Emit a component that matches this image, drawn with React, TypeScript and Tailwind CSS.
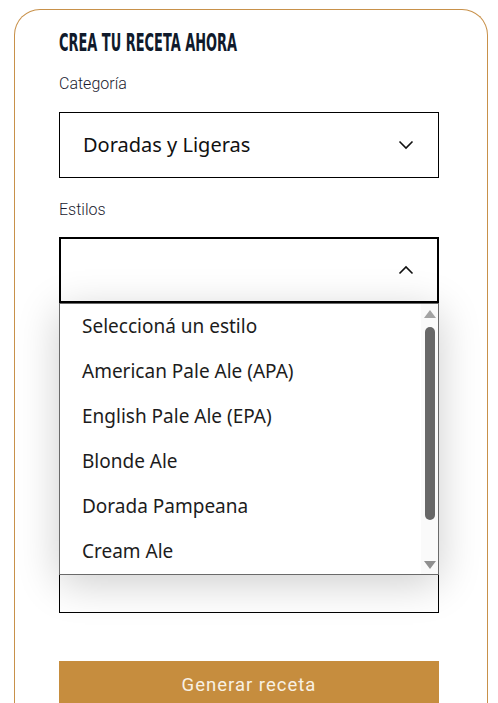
import { useState } from 'react'

const categorias = ['Doradas y Ligeras', 'Rubias Lupuladas', 'Rojas y Ámbar', 'Negras y Tostadas']

const estilos = [
  'Seleccioná un estilo',
  'American Pale Ale (APA)',
  'English Pale Ale (EPA)',
  'Blonde Ale',
  'Dorada Pampeana',
  'Cream Ale',
  'Kölsch',
  'Golden Ale',
]

function Chevron({ up = false }: { up?: boolean }) {
  return (
    <svg width="16" height="10" viewBox="0 0 16 10" className="shrink-0">
      <polyline
        points={up ? '1.5,8.5 8,2 14.5,8.5' : '1.5,1.5 8,8 14.5,1.5'}
        fill="none"
        stroke="#111"
        strokeWidth="1.6"
      />
    </svg>
  )
}

function Scrollbar() {
  return (
    <div className="flex w-[17px] shrink-0 flex-col items-center bg-[#fafafa] pt-[6px] pb-[5px]">
      <svg width="12" height="8" viewBox="0 0 12 8">
        <polygon points="6,0 12,8 0,8" fill="#a3a3a3" />
      </svg>
      <div className="mt-[9px] h-[193px] w-[10px] rounded-full bg-[#676767]" />
      <div className="flex-1" />
      <svg width="12" height="8" viewBox="0 0 12 8">
        <polygon points="0,0 12,0 6,8" fill="#8f8f8f" />
      </svg>
    </div>
  )
}

export default function App() {
  const [categoria] = useState(categorias[0])
  const [open] = useState(true)

  return (
    <div className="min-h-[703px] bg-white pt-[9px] font-['Roboto',sans-serif]">
      <div className="ml-[14px] w-[474px] rounded-t-[26px] border border-b-0 border-[#c8914a] pl-[44px] pt-[21px]">
        <div className="w-[380px]">
          <h2 className="h-[24px] overflow-visible text-[#101a2b]">
            <span className="inline-block origin-left scale-x-[0.6] font-['DejaVu_Sans_Condensed','DejaVu_Sans',sans-serif] text-[24px] font-bold leading-[24px] whitespace-nowrap">
              CREA TU RECETA AHORA
            </span>
          </h2>

          <label className="mt-[19px] block text-[16px] font-light leading-[20px] text-[#1b1b2f]">
            Categoría
          </label>
          <div className="mt-[18px] flex h-[66px] items-center justify-between border border-black pl-[23px] pr-[24px]">
            <span className="font-['Noto_Sans',sans-serif] text-[20px] text-[#111]">{categoria}</span>
            <Chevron />
          </div>

          <label className="mt-[22px] block text-[16px] font-light leading-[20px] text-[#1b1b2f]">
            Estilos
          </label>
          <div className="relative mt-[17px]">
            <div className="flex h-[66px] items-center justify-end border-2 border-black pr-[23px]">
              <Chevron up />
            </div>

            {open && (
              <div className="absolute left-0 top-full z-10 flex h-[272px] w-[380px] border border-[#6a6a6a] bg-white shadow-[0_8px_40px_rgba(0,0,0,0.2)]">
                <ul className="flex-1 font-['Noto_Sans',sans-serif] text-[19px] text-[#1c1c1c]">
                  {estilos.slice(0, 6).map((e) => (
                    <li key={e} className="flex h-[45px] items-center pl-[22px]">
                      {e}
                    </li>
                  ))}
                </ul>
                <Scrollbar />
              </div>
            )}
          </div>

          {/* campo de texto libre, queda debajo del desplegable abierto */}
          <div className="mt-[61px] h-[249px] border border-black" />

          <button className="mt-[48px] flex h-[50px] w-[380px] items-center justify-center bg-[#c68d3e] text-[18.5px] tracking-[1px] text-[#f8f1e4]">
            Generar receta
          </button>
        </div>
      </div>
    </div>
  )
}
